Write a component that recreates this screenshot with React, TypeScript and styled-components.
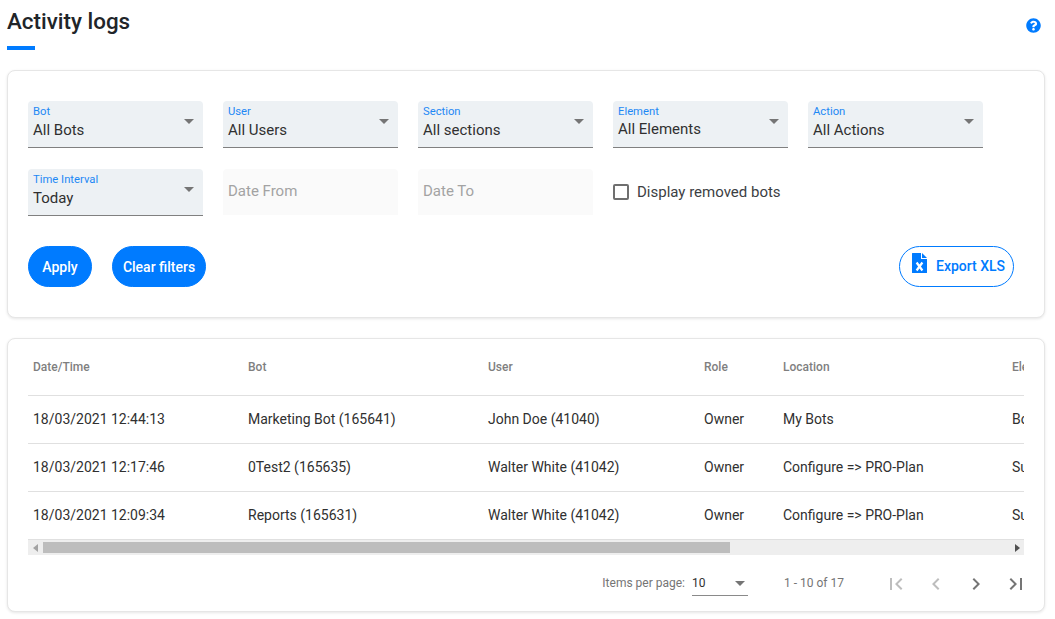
import React from "react";
import styled, { createGlobalStyle } from "styled-components";
import { FaQuestionCircle } from "react-icons/fa";

const Global = createGlobalStyle`
  html, body { margin: 0; padding: 0; background: #fff; }
  body { font-family: Roboto, "Liberation Sans", sans-serif; color: #212529; overflow: hidden; }
`;

const Page = styled.div`
  width: 1055px;
  height: 619px;
  box-sizing: border-box;
  padding: 0 10px 0 7px;
  overflow: hidden;
`;

const Header = styled.header`
  height: 70px;
  display: flex;
  justify-content: space-between;
  align-items: flex-start;
`;

const TitleBlock = styled.div`
  display: flex;
  flex-direction: column;
`;

const Title = styled.h1`
  margin: 7px 0 0;
  font-size: 22.4px;
  line-height: 28px;
  font-weight: 500;
  color: #212529;
`;

const TitleBar = styled.div`
  width: 28px;
  height: 4px;
  margin-top: 11px;
  background: #007bff;
`;

const Help = styled.div`
  margin: 18px 4px 0 0;
  color: #007bff;
  font-size: 15px;
  line-height: 15px;
  display: flex;
`;

const Card = styled.section`
  box-sizing: border-box;
  background: #fff;
  border: 1px solid #e6e6e6;
  border-radius: 8px;
  box-shadow: 0 1px 3px rgba(0, 0, 0, 0.1);
`;

const FilterCard = styled(Card)`
  height: 248px;
  padding: 30px 30px 0 20px;
`;

const FieldRow = styled.div`
  display: flex;
  gap: 20px;
  align-items: flex-start;
  margin-bottom: 21px;
`;

const Select = styled.div`
  position: relative;
  box-sizing: border-box;
  width: 175px;
  height: 47px;
  padding: 5px 5px 0;
  background: #edf1f4;
  border-radius: 4px 4px 0 0;
  border-bottom: 1px solid #808080;
`;

const SelectLabel = styled.div`
  font-size: 11.25px;
  line-height: 12px;
  color: #1e88f5;
`;

const SelectValue = styled.div<{ $tight?: boolean }>`
  font-size: 15px;
  line-height: 20px;
  margin-top: ${(p) => (p.$tight ? 1 : 2)}px;
  color: #303030;
`;

const Arrow = styled.span`
  position: absolute;
  right: 9px;
  top: 18px;
  width: 0;
  height: 0;
  border-left: 5px solid transparent;
  border-right: 5px solid transparent;
  border-top: 5px solid #757575;
`;

const DateField = styled.div`
  box-sizing: border-box;
  width: 175px;
  height: 46px;
  padding: 13px 5px 0;
  background: #fafafa;
  border-radius: 4px 4px 0 0;
  font-size: 15px;
  line-height: 18px;
  color: #a3a3a3;
`;

const CheckLabel = styled.label`
  display: flex;
  align-items: center;
  height: 46px;
  gap: 8px;
  font-size: 15px;
  color: #3c4043;
`;

const CheckBox = styled.span`
  box-sizing: border-box;
  width: 16px;
  height: 16px;
  border: 2px solid #6f6f6f;
  border-radius: 2px;
`;

const Actions = styled.div`
  display: flex;
  align-items: center;
  gap: 20px;
  margin-top: 30px;
`;

const Button = styled.button<{ $w: number }>`
  height: 41px;
  border: 1px solid #007bff;
  border-radius: 21px;
  padding: 0;
  width: ${(p) => p.$w}px;
  background: #007bff;
  color: #fff;
  font: 500 14px Roboto, sans-serif;
`;

const ExportButton = styled.button`
  margin-left: auto;
  height: 41px;
  width: 115px;
  border: 1px solid #007bff;
  border-radius: 21px;
  padding: 0 0 2px 12px;
  background: #fff;
  color: #007bff;
  font: 500 14px Roboto, sans-serif;
  display: flex;
  align-items: center;
  gap: 9px;
`;

const XlsSvg = styled.svg`
  flex: none;
  margin-top: -5px;
`;

const TableCard = styled(Card)`
  height: 274px;
  margin-top: 20px;
  padding: 0 20px;
`;

const TableClip = styled.div`
  overflow: hidden;
  width: 996px;
`;

const Table = styled.table`
  border-collapse: collapse;
  table-layout: fixed;
  width: 1200px;
  font-size: 14px;
`;

const Th = styled.th`
  height: 56px;
  padding: 0 0 0 5px;
  text-align: left;
  font-size: 12px;
  font-weight: 500;
  color: #7f7f7f;
  border-bottom: 1px solid #e0e0e0;
  white-space: nowrap;
`;

const Td = styled.td`
  box-sizing: border-box;
  height: 48px;
  padding: 0 0 2px 5px;
  color: #303030;
  border-bottom: 1px solid #e0e0e0;
  white-space: nowrap;
  overflow: hidden;
`;

const Scrollbar = styled.div`
  display: flex;
  align-items: center;
  width: 996px;
  height: 15px;
  background: #eeeeee;
`;

const ScrollBtn = styled.span<{ $on?: boolean }>`
  display: flex;
  align-items: center;
  justify-content: center;
  flex: 0 0 15px;
  height: 15px;
  color: ${(p) => (p.$on ? "#505050" : "#a3a3a3")};
`;

const ScrollThumb = styled.div`
  height: 11px;
  background: #bdbdbd;
`;

const ScrollTrack = styled.div`
  flex: 1;
`;

const Pager = styled.div`
  display: flex;
  align-items: center;
  height: 56px;
  width: 996px;
  font-size: 12px;
  color: #757575;
  justify-content: flex-end;
`;

const PagerLabel = styled.span`
  margin-right: 7px;
`;

const PageSize = styled.div`
  position: relative;
  box-sizing: border-box;
  width: 56px;
  height: 24px;
  margin-top: 1px;
  border-bottom: 1px solid #8a8a8a;
  color: #303030;
  line-height: 22px;
`;

const SizeArrow = styled(Arrow)`
  right: 3px;
  top: 9px;
`;

const Range = styled.span`
  margin: 0 32px 0 36px;
`;

const PageBtn = styled.span<{ $off?: boolean }>`
  width: 40px;
  height: 40px;
  display: flex;
  align-items: center;
  justify-content: center;
  margin-top: 1px;
  color: ${(p) => (p.$off ? "#bdbdbd" : "#757575")};
`;

const PagerButtons = styled.div`
  display: flex;
  margin-right: -12px;
`;

const selects1 = [
  ["Bot", "All Bots"],
  ["User", "All Users"],
  ["Section", "All sections"],
  ["Element", "All Elements"],
  ["Action", "All Actions"],
];

const cols = [215, 240, 216, 79, 229, 221];
const heads = ["Date/Time", "Bot", "User", "Role", "Location", "Element"];
const rows = [
  ["18/03/2021 12:44:13", "Marketing Bot (165641)", "John Doe (41040)", "Owner", "My Bots", "Bots"],
  ["18/03/2021 12:17:46", "0Test2 (165635)", "Walter White (41042)", "Owner", "Configure => PRO-Plan", "Subscription"],
  ["18/03/2021 12:09:34", "Reports (165631)", "Walter White (41042)", "Owner", "Configure => PRO-Plan", "Subscription"],
];

const pagerIcons = [
  { off: true, d: "M18.41 16.59L13.82 12l4.59-4.59L17 6l-6 6 6 6zM6 6h2v12H6z" },
  { off: true, d: "M15.41 7.41L14 6l-6 6 6 6 1.41-1.41L10.83 12z" },
  { off: false, d: "M10 6L8.59 7.41 13.17 12l-4.58 4.59L10 18l6-6z" },
  { off: false, d: "M5.59 7.41L10.18 12l-4.59 4.59L7 18l6-6-6-6zM16 6h2v12h-2z" },
];

function XlsIcon() {
  return (
    <XlsSvg width="15" height="20" viewBox="0 0 15 20">
      <path d="M0 .5A.5.5 0 0 1 .5 0H9v6h6v13.5a.5.5 0 0 1-.5.5H.5a.5.5 0 0 1-.5-.5z" fill="#007bff" />
      <path d="M10 0l5 5h-5z" fill="#007bff" />
      <path d="M4.6 9.5l5.8 8M10.4 9.5l-5.8 8" stroke="#fff" strokeWidth="2.2" fill="none" />
    </XlsSvg>
  );
}

export default function App() {
  return (
    <Page>
      <Global />
      <Header>
        <TitleBlock>
          <Title>Activity logs</Title>
          <TitleBar />
        </TitleBlock>
        <Help>
          <FaQuestionCircle />
        </Help>
      </Header>

      <FilterCard>
        <FieldRow>
          {selects1.map(([l, v]) => (
            <Select key={l}>
              <SelectLabel>{l}</SelectLabel>
              <SelectValue $tight={l === "Element"}>{v}</SelectValue>
              <Arrow />
            </Select>
          ))}
        </FieldRow>
        <FieldRow>
          <Select>
            <SelectLabel>Time Interval</SelectLabel>
            <SelectValue>Today</SelectValue>
            <Arrow />
          </Select>
          <DateField>Date From</DateField>
          <DateField>Date To</DateField>
          <CheckLabel>
            <CheckBox />
            Display removed bots
          </CheckLabel>
        </FieldRow>
        <Actions>
          <Button $w={64}>Apply</Button>
          <Button $w={94}>Clear filters</Button>
          <ExportButton>
            <XlsIcon />
            Export XLS
          </ExportButton>
        </Actions>
      </FilterCard>

      <TableCard>
        <TableClip>
          <Table>
            <colgroup>
              {cols.map((w, i) => (
                <col key={i} width={w} />
              ))}
            </colgroup>
            <thead>
              <tr>
                {heads.map((h) => (
                  <Th key={h}>{h}</Th>
                ))}
              </tr>
            </thead>
            <tbody>
              {rows.map((r) => (
                <tr key={r[0]}>
                  {r.map((c, i) => (
                    <Td key={i}>{c}</Td>
                  ))}
                </tr>
              ))}
            </tbody>
          </Table>
        </TableClip>
        <Scrollbar>
          <ScrollBtn>
            <svg width="6" height="8" viewBox="0 0 6 8">
              <path d="M5 0v8L0 4z" fill="currentColor" />
            </svg>
          </ScrollBtn>
          <ScrollThumb style={{ width: 687 }} />
          <ScrollTrack />
          <ScrollBtn $on>
            <svg width="6" height="8" viewBox="0 0 6 8">
              <path d="M1 0v8l5-4z" fill="currentColor" />
            </svg>
          </ScrollBtn>
        </Scrollbar>
        <Pager>
          <PagerLabel>Items per page:</PagerLabel>
          <PageSize>
            10
            <SizeArrow />
          </PageSize>
          <Range>1 - 10 of 17</Range>
          <PagerButtons>
            {pagerIcons.map((p, i) => (
              <PageBtn key={i} $off={p.off}>
                <svg width="24" height="24" viewBox="0 0 24 24" fill="currentColor">
                  <path d={p.d} />
                </svg>
              </PageBtn>
            ))}
          </PagerButtons>
        </Pager>
      </TableCard>
    </Page>
  );
}
